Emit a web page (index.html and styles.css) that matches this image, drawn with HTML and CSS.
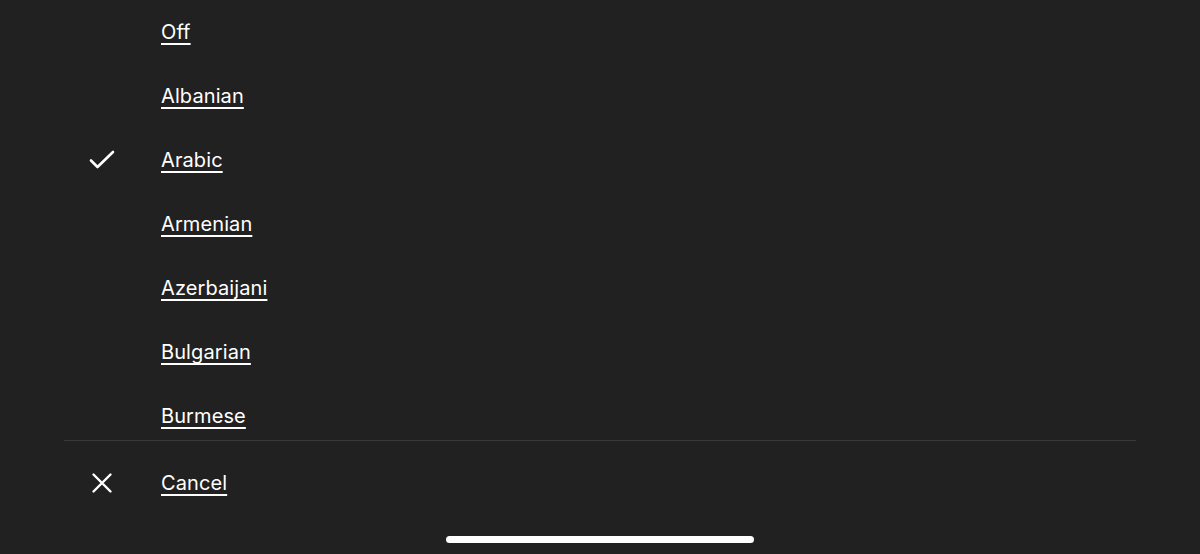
FILE: index.html
```html
<!DOCTYPE html>
<html lang="en">
<head>
  <meta charset="UTF-8" />
  <meta name="viewport" content="width=device-width, initial-scale=1.0" />
  <title>Subtitles</title>
  <link rel="stylesheet" href="styles.css">
</head>
<body>
  <div class="sheet">
    <ul class="options">
      <li class="option"><span class="icon"></span><a href="#">Off</a></li>
      <li class="option"><span class="icon"></span><a href="#">Albanian</a></li>
      <li class="option selected">
        <span class="icon">
          <svg width="26" height="20" viewBox="0 0 26 20"><path d="M2 10.5 L8.5 17 L24 2" fill="none" stroke="#fff" stroke-width="2.6" stroke-linecap="round" stroke-linejoin="round"/></svg>
        </span>
        <a href="#">Arabic</a>
      </li>
      <li class="option"><span class="icon"></span><a href="#">Armenian</a></li>
      <li class="option"><span class="icon"></span><a href="#">Azerbaijani</a></li>
      <li class="option"><span class="icon"></span><a href="#">Bulgarian</a></li>
      <li class="option"><span class="icon"></span><a href="#">Burmese</a></li>
    </ul>
    <div class="divider"></div>
    <div class="option cancel">
      <span class="icon">
        <svg width="22" height="22" viewBox="0 0 22 22"><path d="M2.5 2.5 L19.5 19.5 M19.5 2.5 L2.5 19.5" fill="none" stroke="#fff" stroke-width="2.4" stroke-linecap="round"/></svg>
      </span>
      <a href="#">Cancel</a>
    </div>
  </div>
  <div class="home-bar"></div>
</body>
</html>
```

FILE: styles.css
```css
html, body {
  margin: 0;
  padding: 0;
  background: #212121;
}
body {
  font-family: Inter, "Noto Sans", sans-serif;
  color: #fff;
  height: 554px;
  overflow: hidden;
}
.sheet {
  padding: 0 64px;
}
.options {
  list-style: none;
  margin: 0;
  padding: 0;
}
.option {
  display: flex;
  align-items: center;
  height: 64px;
}
.icon {
  width: 76px;
  display: flex;
  justify-content: center;
  align-items: center;
  flex: none;
}
.option a {
  color: #fff;
  margin-left: 21px;
  font-size: 20px;
  text-decoration: underline;
  text-decoration-thickness: 1.5px;
  text-underline-offset: 4px;
  letter-spacing: 0.1px;
}
.options .option:last-child {
  height: 56px;
  align-items: flex-start;
  padding-top: 20px;
  box-sizing: border-box;
}
.divider {
  height: 1px;
  background: #3a3a3a;
}
.cancel {
  height: 84px;
}
.home-bar {
  width: 308px;
  height: 7px;
  border-radius: 4px;
  background: #fff;
  margin: 11px auto 0;
}
```
